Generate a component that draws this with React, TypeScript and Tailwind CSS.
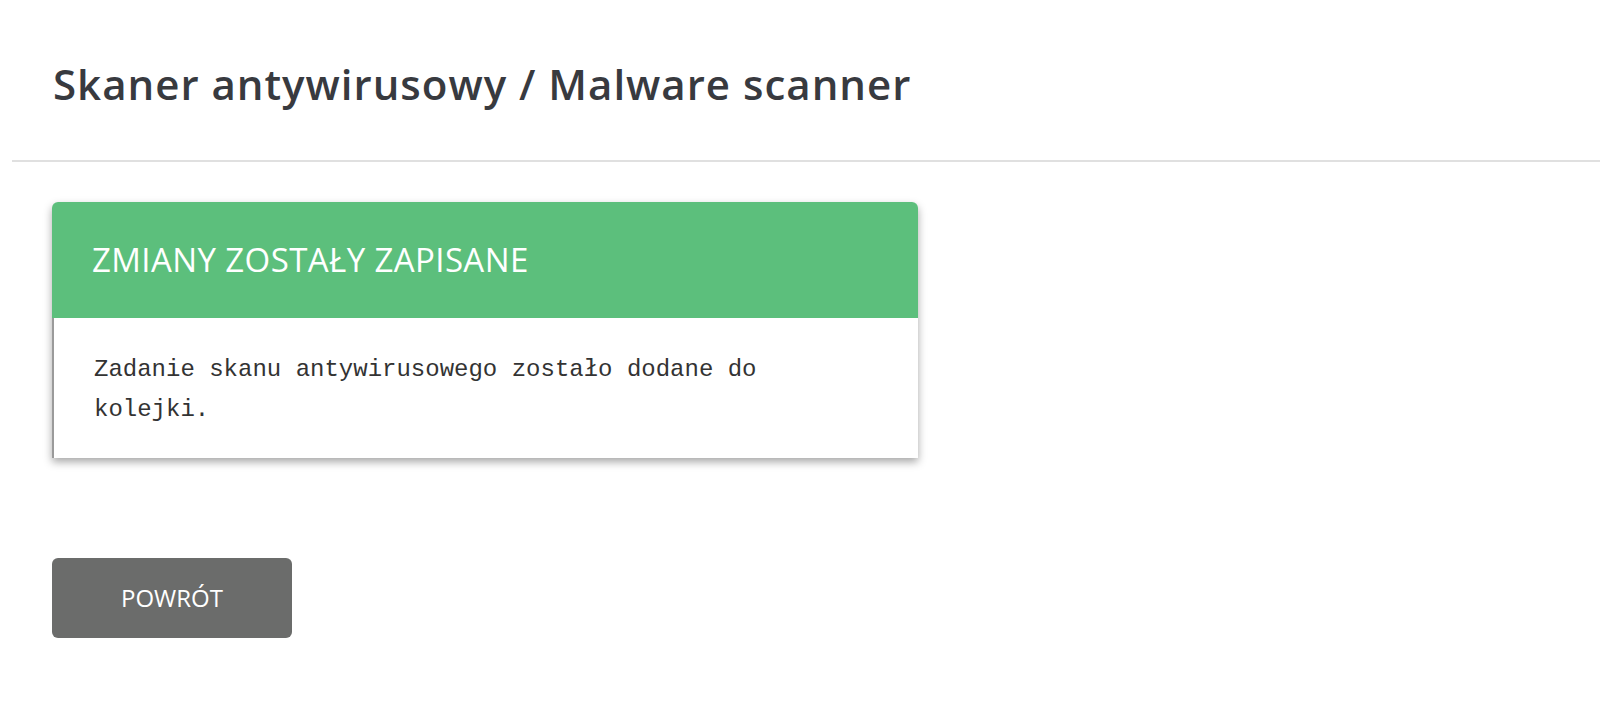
import React from 'react';

const App: React.FC = () => {
  return (
    <div className="min-h-[708px] bg-white pl-3 font-['Open_Sans',sans-serif]">
      <div className="h-[162px] border-b-2 border-[#e0e0e0] pt-[60px] pl-[41px]">
        <h1 className="text-[42px] leading-[48px] font-semibold tracking-[1px] text-[#383a3f]">
          Skaner antywirusowy / Malware scanner
        </h1>
      </div>

      <div className="pl-10 pt-10">
        <div className="w-[866px] rounded-t-md bg-white shadow-[0_4px_8px_rgba(0,0,0,0.35)]">
          <div className="flex h-[116px] items-center rounded-t-md bg-[#5cbf7c] px-10">
            <h2 className="text-[33px] leading-[40px] font-normal tracking-[0.4px] text-white">ZMIANY ZOSTAŁY ZAPISANE</h2>
          </div>
          <div className="border-l-2 border-[#9a9a9a] pl-10 pr-10 pt-[32px] pb-[28px]">
            <p className="font-['Liberation_Mono',monospace] text-[24px] leading-[40px] text-[#333]">
              Zadanie skanu antywirusowego zostało dodane do kolejki.
            </p>
          </div>
        </div>

        <button className="mt-[100px] flex h-[80px] w-[240px] items-center justify-center rounded-md bg-[#6b6c6b] text-[24px] text-white">
          POWRÓT
        </button>
      </div>
    </div>
  );
};

export default App;
